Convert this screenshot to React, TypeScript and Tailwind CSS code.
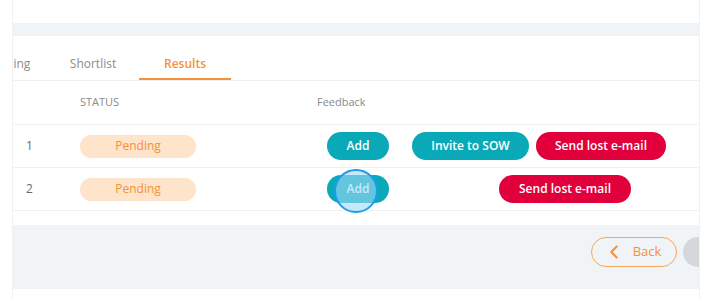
import { ChevronLeft } from "lucide-react"

const rows = [
  { id: 1, status: "Pending", invite: true },
  { id: 2, status: "Pending", invite: false },
]

const tabs = ["Interviewing", "Shortlist", "Results"]

export default function App() {
  return (
    <div
      className="flex h-[298px] w-[708px] overflow-hidden bg-white text-[12px]"
      style={{ fontFamily: '"Open Sans", "Liberation Sans", sans-serif' }}
    >
      <div className="w-[13px] shrink-0 border-r border-[#f1f1f1] bg-white" />

      <div className="flex w-[686px] shrink-0 flex-col overflow-hidden">
        <div className="h-[23px] bg-white" />
        <div className="h-[13px] bg-[#f1f4f7]" />

        {/* Tabs */}
        <div className="flex h-[45px] border-b border-[#eeeeee] bg-white">
          <div className="-ml-[63px] flex">
            {tabs.map((tab, i) => {
              const active = tab === "Results"
              return (
                <div
                  key={tab}
                  className={`flex w-[92px] items-center justify-center border-b-2 pt-[14px] ${
                    i === 1 ? "ml-[5px]" : ""
                  } ${active ? "border-[#f5913a] font-semibold text-[#f5913a]" : "border-transparent text-[#8c8c8c]"}`}
                >
                  {tab}
                </div>
              )
            })}
          </div>
        </div>

        {/* Table header */}
        <div className="flex h-[44px] items-center border-b border-[#f0f0f0] text-[11px] text-[#8a8a8a]">
          <div className="w-[67px] pl-[13px]" />
          <div className="w-[237px]">STATUS</div>
          <div>Feedback</div>
        </div>

        {rows.map((row) => (
          <div key={row.id} className="relative flex h-[43px] items-center border-b border-[#f0f0f0]">
            <div className="w-[67px] pl-[13px] text-[#6b6b6b]">{row.id}</div>
            <div className="w-[247px]">
              <span className="flex h-[23px] w-[116px] items-center justify-center rounded-full bg-[#fde4cb] text-[#f5913a]">
                {row.status}
              </span>
            </div>
            <button className="flex h-[28px] w-[62px] items-center justify-center rounded-full bg-[#0aa9b8] font-semibold text-white">
              Add
            </button>
            {row.invite ? (
              <div className="ml-[23px] flex gap-[7px]">
                <button className="flex h-[28px] w-[117px] items-center justify-center rounded-full bg-[#0aa9b8] font-semibold text-white">
                  Invite to SOW
                </button>
                <button className="flex h-[28px] w-[130px] items-center justify-center rounded-full bg-[#e1003b] font-semibold text-white">
                  Send lost e-mail
                </button>
              </div>
            ) : (
              <button className="ml-[110px] flex h-[28px] w-[132px] items-center justify-center rounded-full bg-[#e1003b] font-semibold text-white">
                Send lost e-mail
              </button>
            )}
            {!row.invite && (
              <span className="absolute left-[321px] top-[1px] h-[44px] w-[44px] rounded-full border-2 border-[#1e9be9] bg-[#9fd8f7]/60" />
            )}
          </div>
        ))}

        <div className="h-[14px] bg-white" />

        {/* Footer */}
        <div className="flex h-[64px] items-start justify-end gap-[6px] bg-[#f1f4f7] pt-[12px]">
          <button className="flex h-[30px] w-[86px] items-center justify-center gap-[8px] rounded-full border border-[#f5a55a] pr-[4px] text-[13px] text-[#f5913a]">
            <ChevronLeft className="h-[22px] w-[22px]" strokeWidth={2.25} />
            Back
          </button>
          <span className="-mr-[14px] h-[30px] w-[30px] rounded-full bg-[#d4d7db]" />
        </div>
        <div className="flex-1 bg-white" />
      </div>

      <div className="w-[9px] shrink-0 border-l border-[#f1f1f1] bg-white" />
    </div>
  )
}
